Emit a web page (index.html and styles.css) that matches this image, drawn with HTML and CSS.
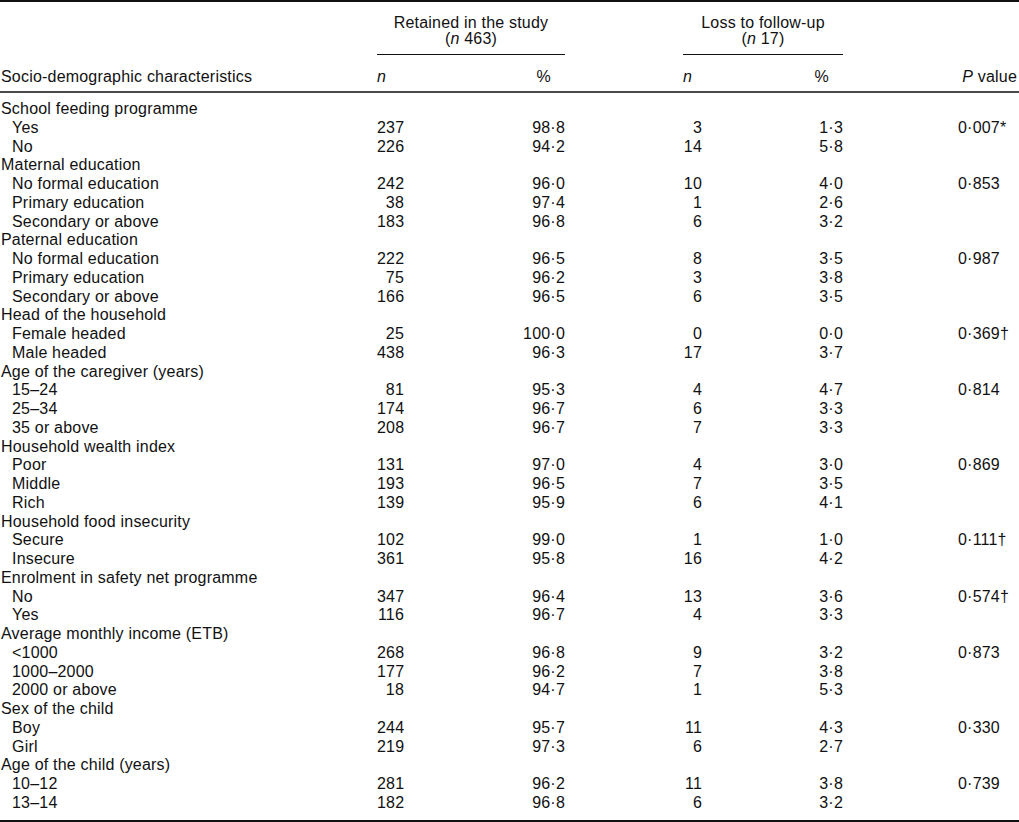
FILE: index.html
```html
<!DOCTYPE html>
<html lang="en">
<head>
<meta charset="utf-8">
<title>Retention and loss to follow-up by socio-demographic characteristics</title>
<link rel="stylesheet" href="styles.css">
</head>
<body>
<table class="tbl">
  <colgroup>
    <col class="c-label">
    <col class="c-n1">
    <col class="c-p1">
    <col class="c-sp1">
    <col class="c-n2">
    <col class="c-p2">
    <col class="c-sp2">
    <col class="c-pv">
  </colgroup>
  <thead>
    <tr class="h1">
      <th></th>
      <th colspan="2" class="grp">Retained in the study<br>(<i>n</i> 463)</th>
      <th></th>
      <th colspan="2" class="grp">Loss to follow-up<br>(<i>n</i> 17)</th>
      <th></th>
      <th></th>
    </tr>
    <tr class="h2">
      <th class="lab">Socio-demographic characteristics</th>
      <th class="hn"><i>n</i></th>
      <th class="hp">%</th>
      <th></th>
      <th class="hn"><i>n</i></th>
      <th class="hp">%</th>
      <th></th>
      <th class="hv"><i>P</i> value</th>
    </tr>
  </thead>
  <tbody>
    <tr class="cat first"><td>School feeding programme</td><td></td><td></td><td></td><td></td><td></td><td></td><td></td></tr>
    <tr><td class="sub">Yes</td><td class="num">237</td><td class="num">98·8</td><td></td><td class="num">3</td><td class="num">1·3</td><td></td><td class="pv">0·007*</td></tr>
    <tr><td class="sub">No</td><td class="num">226</td><td class="num">94·2</td><td></td><td class="num">14</td><td class="num">5·8</td><td></td><td class="pv"></td></tr>

    <tr class="cat"><td>Maternal education</td><td></td><td></td><td></td><td></td><td></td><td></td><td></td></tr>
    <tr><td class="sub">No formal education</td><td class="num">242</td><td class="num">96·0</td><td></td><td class="num">10</td><td class="num">4·0</td><td></td><td class="pv">0·853</td></tr>
    <tr><td class="sub">Primary education</td><td class="num">38</td><td class="num">97·4</td><td></td><td class="num">1</td><td class="num">2·6</td><td></td><td class="pv"></td></tr>
    <tr><td class="sub">Secondary or above</td><td class="num">183</td><td class="num">96·8</td><td></td><td class="num">6</td><td class="num">3·2</td><td></td><td class="pv"></td></tr>

    <tr class="cat"><td>Paternal education</td><td></td><td></td><td></td><td></td><td></td><td></td><td></td></tr>
    <tr><td class="sub">No formal education</td><td class="num">222</td><td class="num">96·5</td><td></td><td class="num">8</td><td class="num">3·5</td><td></td><td class="pv">0·987</td></tr>
    <tr><td class="sub">Primary education</td><td class="num">75</td><td class="num">96·2</td><td></td><td class="num">3</td><td class="num">3·8</td><td></td><td class="pv"></td></tr>
    <tr><td class="sub">Secondary or above</td><td class="num">166</td><td class="num">96·5</td><td></td><td class="num">6</td><td class="num">3·5</td><td></td><td class="pv"></td></tr>

    <tr class="cat"><td>Head of the household</td><td></td><td></td><td></td><td></td><td></td><td></td><td></td></tr>
    <tr><td class="sub">Female headed</td><td class="num">25</td><td class="num">100·0</td><td></td><td class="num">0</td><td class="num">0·0</td><td></td><td class="pv">0·369†</td></tr>
    <tr><td class="sub">Male headed</td><td class="num">438</td><td class="num">96·3</td><td></td><td class="num">17</td><td class="num">3·7</td><td></td><td class="pv"></td></tr>

    <tr class="cat"><td>Age of the caregiver (years)</td><td></td><td></td><td></td><td></td><td></td><td></td><td></td></tr>
    <tr><td class="sub">15–24</td><td class="num">81</td><td class="num">95·3</td><td></td><td class="num">4</td><td class="num">4·7</td><td></td><td class="pv">0·814</td></tr>
    <tr><td class="sub">25–34</td><td class="num">174</td><td class="num">96·7</td><td></td><td class="num">6</td><td class="num">3·3</td><td></td><td class="pv"></td></tr>
    <tr><td class="sub">35 or above</td><td class="num">208</td><td class="num">96·7</td><td></td><td class="num">7</td><td class="num">3·3</td><td></td><td class="pv"></td></tr>

    <tr class="cat"><td>Household wealth index</td><td></td><td></td><td></td><td></td><td></td><td></td><td></td></tr>
    <tr><td class="sub">Poor</td><td class="num">131</td><td class="num">97·0</td><td></td><td class="num">4</td><td class="num">3·0</td><td></td><td class="pv">0·869</td></tr>
    <tr><td class="sub">Middle</td><td class="num">193</td><td class="num">96·5</td><td></td><td class="num">7</td><td class="num">3·5</td><td></td><td class="pv"></td></tr>
    <tr><td class="sub">Rich</td><td class="num">139</td><td class="num">95·9</td><td></td><td class="num">6</td><td class="num">4·1</td><td></td><td class="pv"></td></tr>

    <tr class="cat"><td>Household food insecurity</td><td></td><td></td><td></td><td></td><td></td><td></td><td></td></tr>
    <tr><td class="sub">Secure</td><td class="num">102</td><td class="num">99·0</td><td></td><td class="num">1</td><td class="num">1·0</td><td></td><td class="pv">0·111†</td></tr>
    <tr><td class="sub">Insecure</td><td class="num">361</td><td class="num">95·8</td><td></td><td class="num">16</td><td class="num">4·2</td><td></td><td class="pv"></td></tr>

    <tr class="cat"><td>Enrolment in safety net programme</td><td></td><td></td><td></td><td></td><td></td><td></td><td></td></tr>
    <tr><td class="sub">No</td><td class="num">347</td><td class="num">96·4</td><td></td><td class="num">13</td><td class="num">3·6</td><td></td><td class="pv">0·574†</td></tr>
    <tr><td class="sub">Yes</td><td class="num">116</td><td class="num">96·7</td><td></td><td class="num">4</td><td class="num">3·3</td><td></td><td class="pv"></td></tr>

    <tr class="cat"><td>Average monthly income (ETB)</td><td></td><td></td><td></td><td></td><td></td><td></td><td></td></tr>
    <tr><td class="sub">&lt;1000</td><td class="num">268</td><td class="num">96·8</td><td></td><td class="num">9</td><td class="num">3·2</td><td></td><td class="pv">0·873</td></tr>
    <tr><td class="sub">1000–2000</td><td class="num">177</td><td class="num">96·2</td><td></td><td class="num">7</td><td class="num">3·8</td><td></td><td class="pv"></td></tr>
    <tr><td class="sub">2000 or above</td><td class="num">18</td><td class="num">94·7</td><td></td><td class="num">1</td><td class="num">5·3</td><td></td><td class="pv"></td></tr>

    <tr class="cat"><td>Sex of the child</td><td></td><td></td><td></td><td></td><td></td><td></td><td></td></tr>
    <tr><td class="sub">Boy</td><td class="num">244</td><td class="num">95·7</td><td></td><td class="num">11</td><td class="num">4·3</td><td></td><td class="pv">0·330</td></tr>
    <tr><td class="sub">Girl</td><td class="num">219</td><td class="num">97·3</td><td></td><td class="num">6</td><td class="num">2·7</td><td></td><td class="pv"></td></tr>

    <tr class="cat"><td>Age of the child (years)</td><td></td><td></td><td></td><td></td><td></td><td></td><td></td></tr>
    <tr><td class="sub">10–12</td><td class="num">281</td><td class="num">96·2</td><td></td><td class="num">11</td><td class="num">3·8</td><td></td><td class="pv">0·739</td></tr>
    <tr class="last"><td class="sub">13–14</td><td class="num">182</td><td class="num">96·8</td><td></td><td class="num">6</td><td class="num">3·2</td><td></td><td class="pv"></td></tr>
  </tbody>
</table>
</body>
</html>
```

FILE: styles.css
```css
html, body {
  margin: 0;
  padding: 0;
  background: #ffffff;
}

body {
  font-family: "Liberation Sans", Arial, sans-serif;
  font-size: 16px;
  letter-spacing: 0.2px;
  color: #111111;
}

.tbl {
  width: 1019px;
  table-layout: fixed;
  border-collapse: collapse;
  border-top: 2px solid #111111;
  border-bottom: 2px solid #111111;
}

.c-label { width: 377px; }
.c-n1 { width: 27px; }
.c-p1 { width: 161px; }
.c-sp1 { width: 118px; }
.c-n2 { width: 19px; }
.c-p2 { width: 141px; }
.c-sp2 { width: 115px; }
.c-pv { width: 61px; }

th, td {
  padding: 0;
  font-weight: normal;
  white-space: nowrap;
  overflow: visible;
}

.h1 th {
  line-height: 16px;
  padding-top: 13px;
  padding-bottom: 7px;
  vertical-align: top;
}

.h1 .grp {
  text-align: center;
  border-bottom: 1px solid #111111;
}

.h2 {
  border-bottom: 2px solid #4a4a4a;
}

.h2 th {
  line-height: 18px;
  padding-top: 13px;
  padding-bottom: 5px;
  vertical-align: bottom;
}

.h2 .lab {
  text-align: left;
  padding-left: 1px;
}

.h2 .hn {
  text-align: left;
}

.h2 .hp {
  text-align: right;
  padding-right: 14px;
}

.h2 .hv {
  text-align: right;
  padding-right: 2px;
}

tbody td {
  line-height: 18.75px;
  height: 18.75px;
}

tbody .first td {
  padding-top: 7px;
}

tbody .last td {
  padding-bottom: 7px;
}

.cat td:first-child {
  padding-left: 1px;
}

.sub {
  padding-left: 12px;
}

.num {
  text-align: right;
}

.pv {
  text-align: left;
}
```
